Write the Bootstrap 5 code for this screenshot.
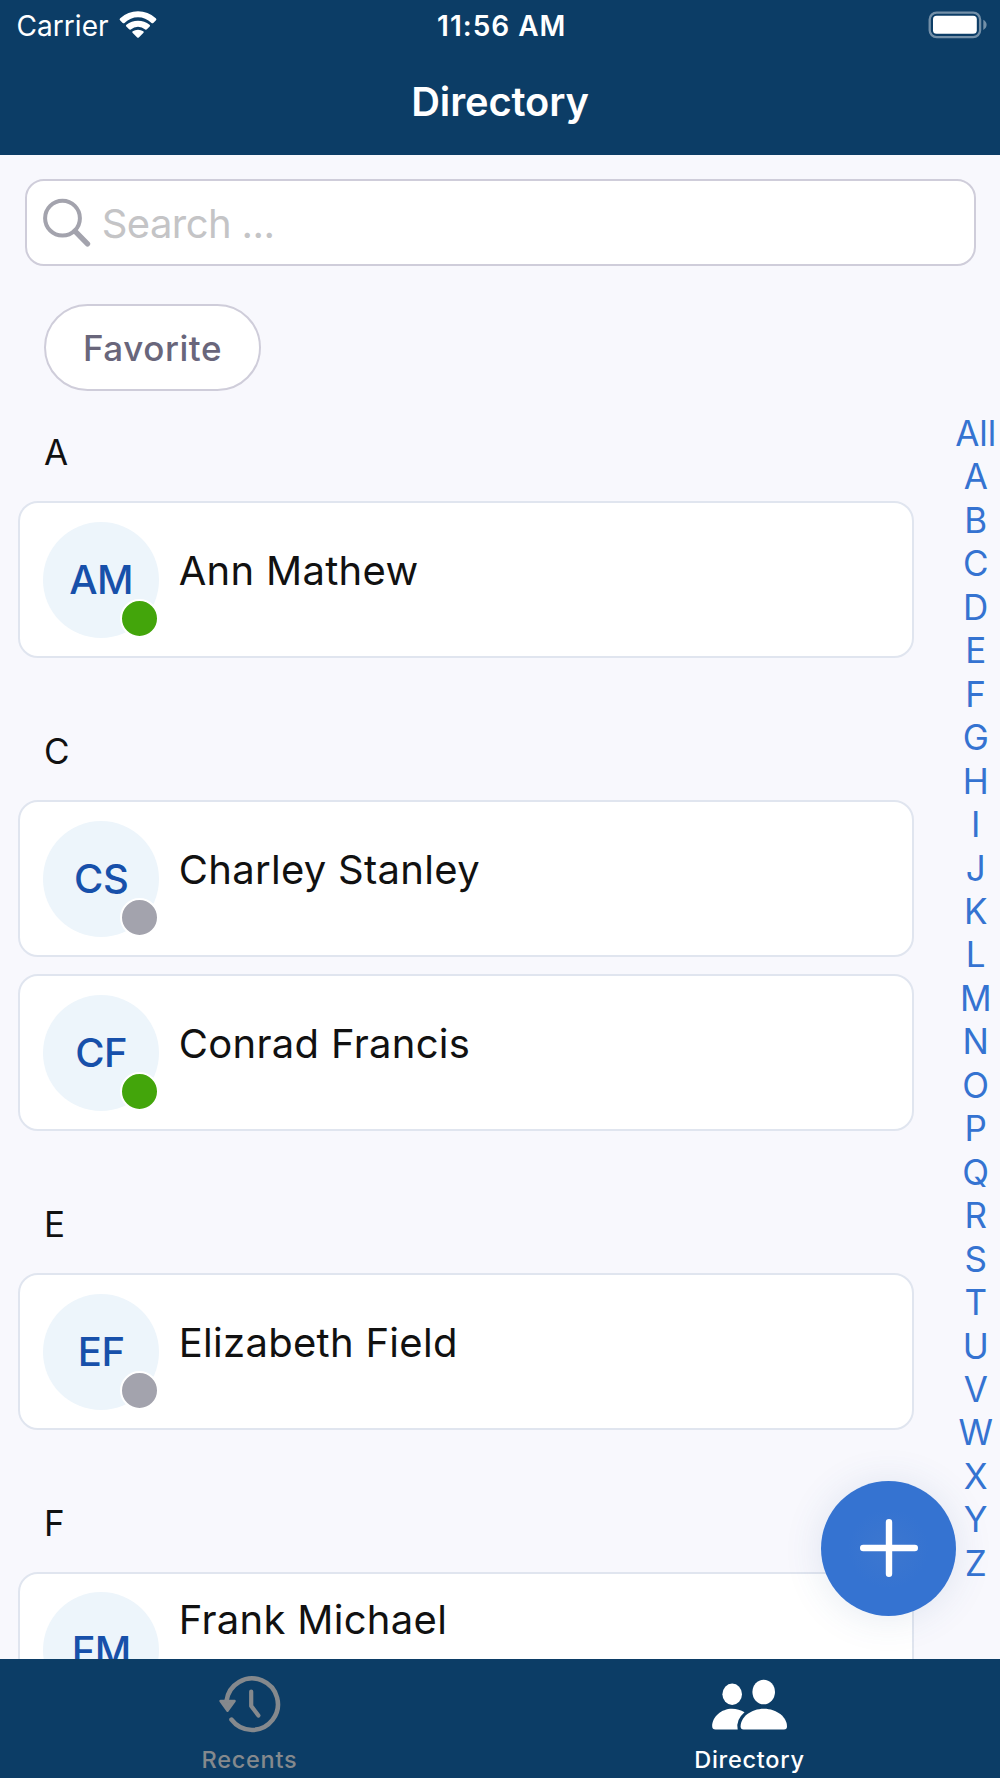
<!DOCTYPE html>
<html lang="en">
<head>
<meta charset="utf-8">
<meta name="viewport" content="width=device-width, initial-scale=1">
<title>Directory</title>
<link href="https://cdn.jsdelivr.net/npm/bootstrap@5.3.0/dist/css/bootstrap.min.css" rel="stylesheet">
<style>
  body { font-family: Inter, "Liberation Sans", sans-serif; background: #f8f8fd; color: #111; height: 1778px; }
  svg { display: block; flex: none; }
  .app-head { background: #0c3d66; height: 154.5px; flex: none; }
  .status { height: 50.6px; padding: 0 13px 0 16.5px; font-size: 28px; line-height: 50.6px; }
  .status > div { flex: 1 1 0; }
  .carrier { letter-spacing: .05px; margin-right: 10.5px; padding-top: 1px; }
  .clock { font-weight: 600; letter-spacing: 1px; padding-top: 1px; }
  .app-title { font-size: 39.8px; font-weight: 600; line-height: 102.4px; letter-spacing: -.1px; }
  .search-box { height: 87px; margin: 24.5px 24.5px 0; padding-left: 16.8px; border: 2.4px solid #cfcdda; border-radius: 19px; }
  .search-box input { font-size: 40px; line-height: 60px; letter-spacing: -.6px; color: #111; margin-left: 10.5px; padding: 2px 0 0; }
  .search-box input::placeholder { color: #c4c4c6; opacity: 1; }
  .pill { margin: 38px 0 0 44px; width: 217px; height: 87px; border: 2.4px solid #cfcdda; font-size: 35px; font-weight: 500; line-height: 1; color: #69667b; letter-spacing: .55px; padding: 2px 0 0; }
  .people { width: 914px; padding-left: 18px; margin-top: 11.3px; flex: none; }
  .group + .group { margin-top: 43.3px; }
  .letter { font-size: 35px; line-height: 97px; padding: 2px 0 0 26px; font-weight: 400; }
  .person { height: 156.6px; padding: 18.6px 0 0 23.2px; border: 2.4px solid #e0e5ef; border-radius: 20px; }
  .person + .person { margin-top: 17.3px; }
  .avatar { width: 116px; height: 116px; background: #edf5fb; color: #1750aa; font-size: 40px; font-weight: 500; letter-spacing: -.5px; padding-top: 1px; flex: none; }
  .dot { right: 0; bottom: 0; width: 39px; height: 39px; border: 2.4px solid #fff; background: #a3a3ad; }
  .dot.on { background: #43a50b; }
  .who { font-size: 40px; line-height: 60px; margin: 19.5px 0 0 19.5px; letter-spacing: .3px; }
  .who.raised { margin-top: -2.2px; }
  .alpha { margin: 21px 0 0 auto; width: 48.6px; color: #3573d1; font-size: 35px; line-height: 43.46px; }
  .fab { left: 821px; top: 1326.3px; width: 135.4px; height: 135.4px; background: radial-gradient(circle, #3d77cf 0, #3573d1 42%); box-shadow: 0 2px 38px rgba(53,90,150,.13); }
  .tabs { background: #0c3d66; height: 118.800px; flex: none; font-size: 23.5px; font-weight: 500; line-height: 28px; }
  .tab { color: #85898d; letter-spacing: .75px; padding: 15px 1px 0 0; }
  .tab.current { color: #fff; }
  .tab span { margin-top: 10px; }
</style>
</head>
<body class="d-flex flex-column overflow-hidden m-0">
<header class="app-head text-white">
  <div class="status d-flex align-items-center">
    <div class="d-flex align-items-center">
      <span class="carrier">Carrier</span>
      <svg width="38" height="28" viewBox="0 0 38 28" fill="#fff">
        <path d="M1 9.2Q0 8.2 1.2 7.200Q9 .3 19 .3T36.800 7.200Q38 8.200 37 9.200L34.300 11.900Q33.500 12.700 32.500 11.900Q26.500 6.200 19 6.200T5.500 11.900Q4.500 12.700 3.700 11.900Z"/>
        <path d="M7.300 15.600Q6.400 14.700 7.400 13.800Q12.500 9.700 19 9.700T30.600 13.800Q31.600 14.700 30.700 15.600L27.900 18.300Q27.100 19 26.200 18.400Q23 15.700 19 15.700T11.800 18.400Q10.900 19 10.100 18.300Z"/>
        <path d="M13.500 21.700Q12.800 20.900 13.700 20.300Q16 18.700 19 18.700T24.300 20.300Q25.200 20.900 24.500 21.700L19.800 26.400Q19 27.100 18.200 26.400Z"/>
      </svg>
    </div>
    <div class="clock text-center">11:56 AM</div>
    <div class="d-flex justify-content-end">
      <svg width="59" height="28" viewBox="0 0 59 28">
        <rect x="1.700" y="1.600" width="50.400" height="24.600" rx="7" fill="none" stroke="#7490a8" stroke-width="2.300"/>
        <rect x="5" y="4.800" width="43.800" height="18" rx="3.600" fill="#fff"/>
        <path d="M55.300 8.700Q58.600 10.500 58.600 13.800T55.300 18.900Z" fill="#7490a8"/>
      </svg>
    </div>
  </div>
  <h1 class="app-title text-center m-0">Directory</h1>
</header>

<main class="position-relative flex-grow-1 overflow-hidden">
  <div class="search-box d-flex align-items-center bg-white">
    <svg width="48" height="50" viewBox="0 0 48 50" fill="none" stroke="#a3a3ad" stroke-linecap="round">
      <circle cx="19.500" cy="20.200" r="17.400" stroke-width="4"/>
      <path d="M32 33.200L44.500 45.800" stroke-width="5.400"/>
    </svg>
    <input class="border-0 bg-transparent flex-grow-1" type="text" placeholder="Search ...">
  </div>
  <button class="pill d-flex align-items-center justify-content-center rounded-pill bg-white" type="button">Favorite</button>

  <div class="d-flex align-items-start">
    <div class="people">
      <section class="group">
        <h2 class="letter m-0">A</h2>
        <div class="person d-flex align-items-start bg-white">
          <div class="avatar position-relative rounded-circle d-flex align-items-center justify-content-center">AM<i class="dot on position-absolute rounded-circle"></i></div>
          <div class="who">Ann Mathew</div>
        </div>
      </section>
      <section class="group">
        <h2 class="letter m-0">C</h2>
        <div class="person d-flex align-items-start bg-white">
          <div class="avatar position-relative rounded-circle d-flex align-items-center justify-content-center">CS<i class="dot position-absolute rounded-circle"></i></div>
          <div class="who">Charley Stanley</div>
        </div>
        <div class="person d-flex align-items-start bg-white">
          <div class="avatar position-relative rounded-circle d-flex align-items-center justify-content-center">CF<i class="dot on position-absolute rounded-circle"></i></div>
          <div class="who">Conrad Francis</div>
        </div>
      </section>
      <section class="group">
        <h2 class="letter m-0">E</h2>
        <div class="person d-flex align-items-start bg-white">
          <div class="avatar position-relative rounded-circle d-flex align-items-center justify-content-center">EF<i class="dot position-absolute rounded-circle"></i></div>
          <div class="who">Elizabeth Field</div>
        </div>
      </section>
      <section class="group">
        <h2 class="letter m-0">F</h2>
        <div class="person d-flex align-items-start bg-white">
          <div class="avatar position-relative rounded-circle d-flex align-items-center justify-content-center">FM</div>
          <div class="who raised">Frank Michael</div>
        </div>
      </section>
    </div>
    <nav class="alpha d-flex flex-column align-items-center">
      <span>All</span><span>A</span><span>B</span><span>C</span><span>D</span><span>E</span><span>F</span><span>G</span><span>H</span><span>I</span><span>J</span><span>K</span><span>L</span><span>M</span><span>N</span><span>O</span><span>P</span><span>Q</span><span>R</span><span>S</span><span>T</span><span>U</span><span>V</span><span>W</span><span>X</span><span>Y</span><span>Z</span>
    </nav>
  </div>

  <button class="fab position-absolute rounded-circle border-0 p-0 d-flex align-items-center justify-content-center" type="button" aria-label="Add">
    <svg width="60" height="60" viewBox="0 0 60 60" stroke="#fff" stroke-width="6.400" stroke-linecap="round"><path d="M30 4.200V55.800M4.200 30H55.800"/></svg>
  </button>
</main>

<footer class="tabs d-flex">
  <div class="tab w-50 d-flex flex-column align-items-center">
    <svg width="68" height="62" viewBox="0 0 68 62" fill="none" stroke="#85898d" stroke-width="4.600" stroke-linecap="round" stroke-linejoin="round">
      <path d="M10.500 27A25.800 25.800 0 1 1 15.500 45.700"/>
      <path d="M35.200 17.500V32L42.400 41.500" stroke-width="4.200"/>
      <path d="M4.500 27H18.600L11.500 36.800Z" fill="#85898d" stroke-width="2.400"/>
    </svg>
    <span>Recents</span>
  </div>
  <div class="tab current w-50 d-flex flex-column align-items-center">
    <svg width="78" height="62" viewBox="0 0 78 62" fill="#fff">
      <ellipse cx="21.200" cy="20.300" rx="9.800" ry="10.700"/>
      <ellipse cx="52.700" cy="18" rx="11.300" ry="12.300"/>
      <path d="M4.500 55.500Q1.200 55.500 1.200 52.500C1.200 42.500 10.500 34.700 21 34.700Q28 34.700 33.500 38.200Q24.500 46 26.700 55.500Z"/>
      <path d="M32.500 55.500Q29.600 55.500 29.600 52.500C29.600 43 40 34.700 52.900 34.700S76 43 76 52.500Q76 55.500 73 55.500Z"/>
    </svg>
    <span>Directory</span>
  </div>
</footer>
<script src="https://cdn.jsdelivr.net/npm/bootstrap@5.3.0/dist/js/bootstrap.bundle.min.js"></script>
</body>
</html>
